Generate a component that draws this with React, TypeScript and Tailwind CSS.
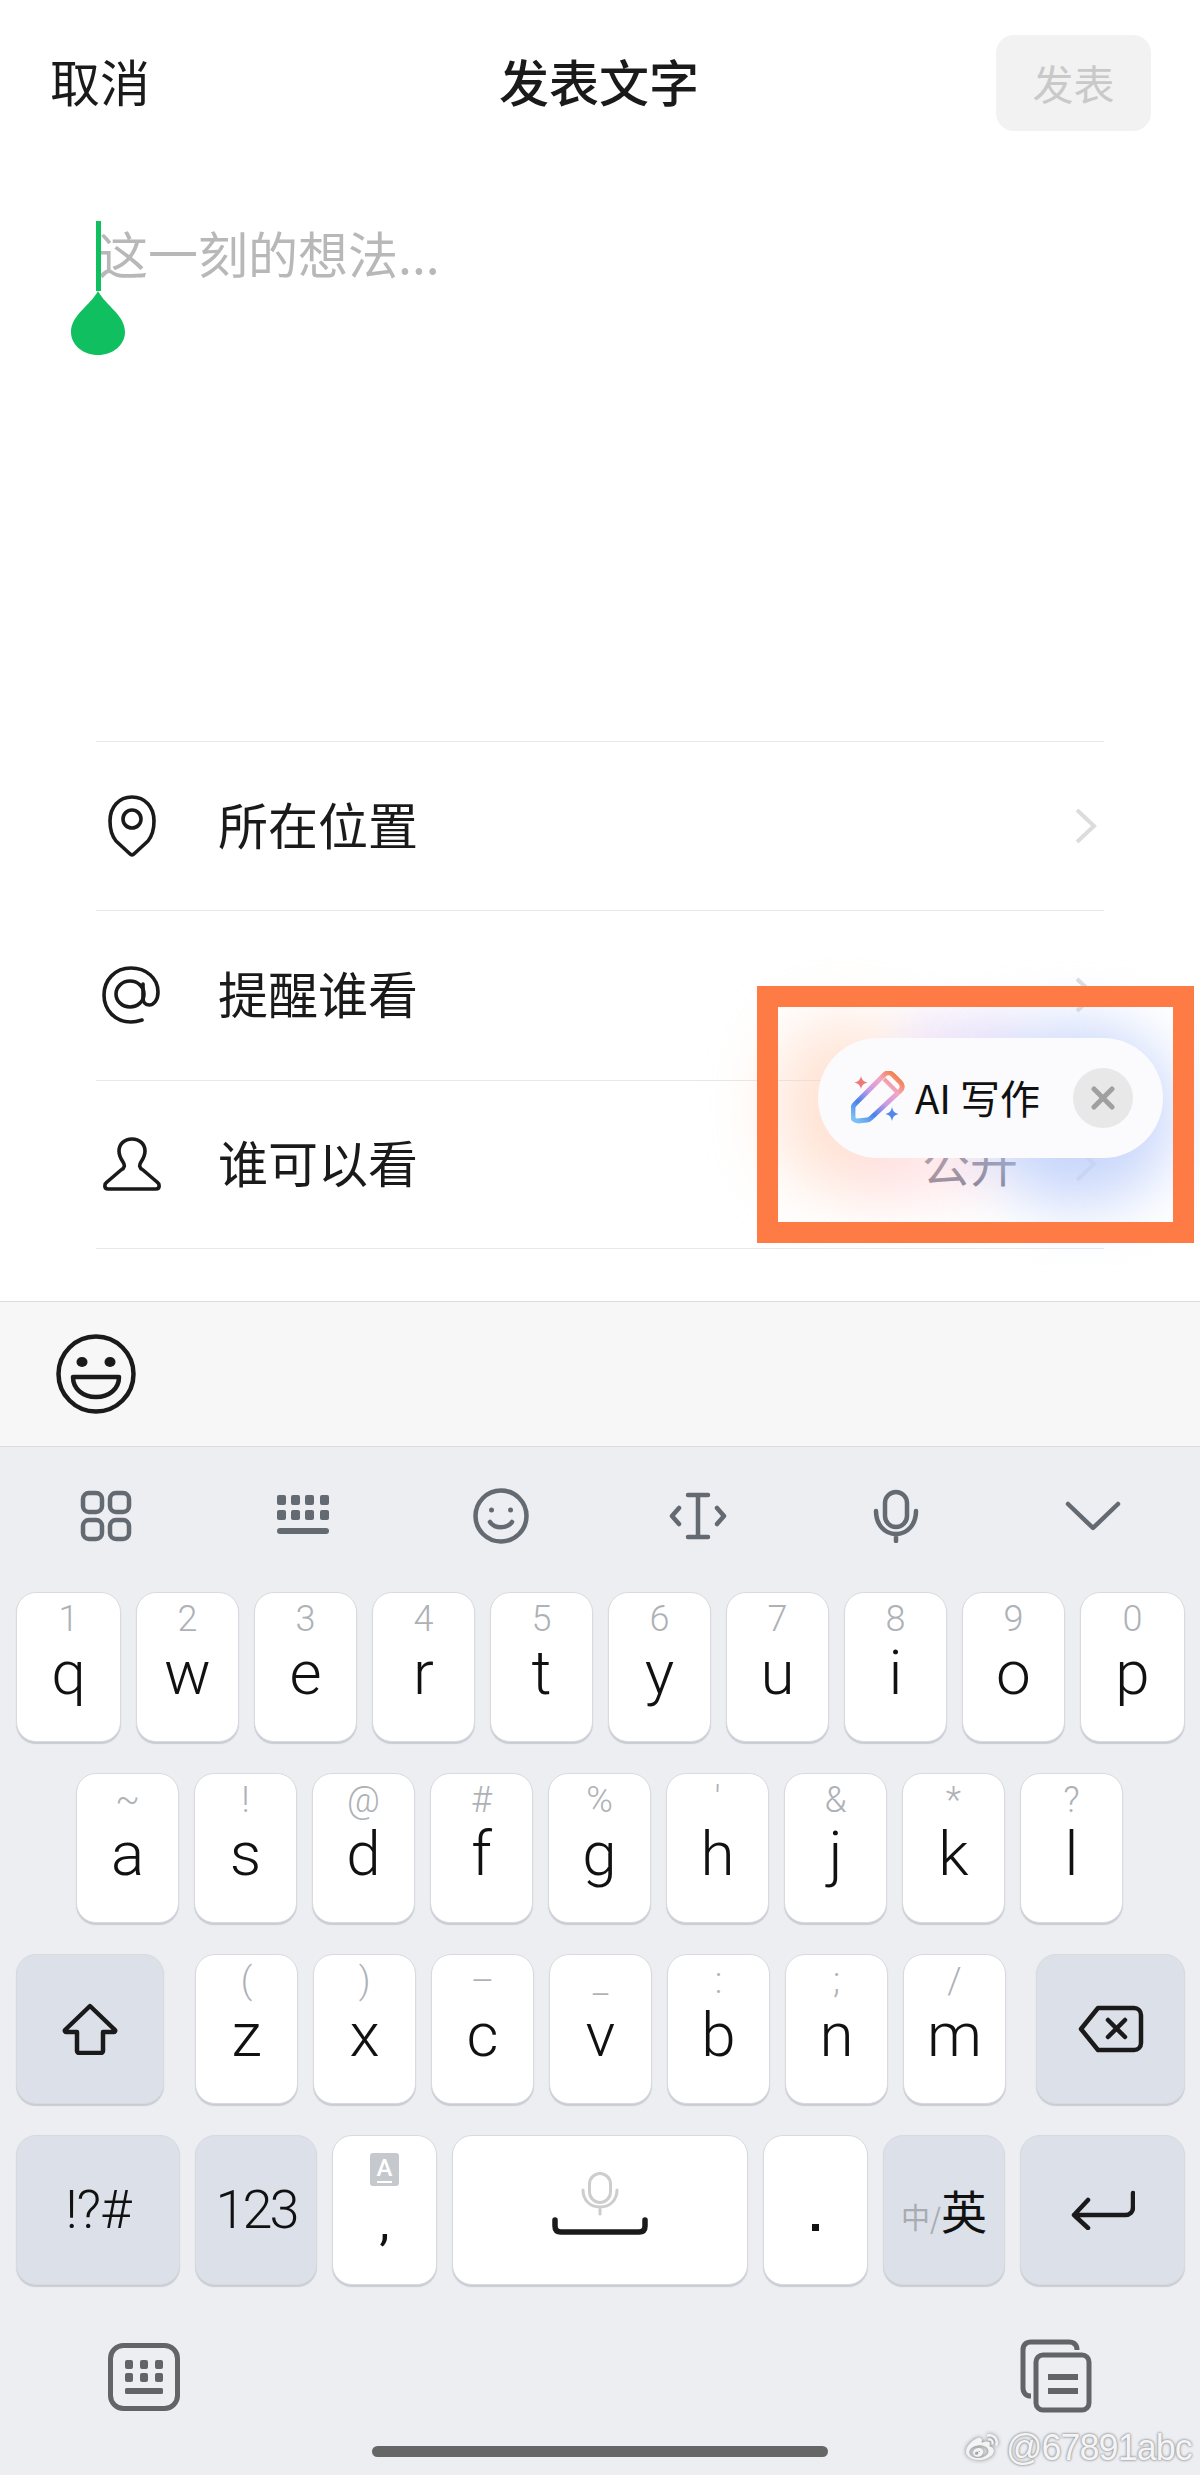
import React from 'react';
import { FaWeibo } from 'react-icons/fa';

const cjk = '[font-family:"Noto_Sans_CJK_SC","Noto_Sans",sans-serif]';

const IconStroke = ({ w, h, vb, sw = 4, color = '#1a1a1a', children }: any) => (
  <svg width={w} height={h} viewBox={vb} fill="none" stroke={color} strokeWidth={sw} strokeLinecap="round" strokeLinejoin="round">
    {children}
  </svg>
);

const Chevron = ({ color = '#dcdcdc' }: { color?: string }) => (
  <svg width="24" height="38" viewBox="0 0 24 38" fill="none" stroke={color} strokeWidth="4">
    <path d="M3 3l17 16L3 35" />
  </svg>
);

const PinIcon = () => (
  <IconStroke w={48} h={62} vb="0 0 48 62" sw={3.6}>
    <path d="M24 60c-1 0-2-1-3-2L8 46C4 41 2 34 2 26 2 12 11 2 24 2s22 10 22 24c0 8-2 15-6 20L27 58c-1 1-2 2-3 2z" />
    <circle cx="24" cy="24" r="9" />
  </IconStroke>
);

const AtIcon = () => (
  <div className="mr-[2px]">
    <IconStroke w={58} h={58} vb="0 0 58 58" sw={3.6}>
      <path d="M40 54c-3 1-7 2-11 2C13 56 2 44 2 29S13 2 29 2c15 0 27 10 27 24 0 8-4 13-9 13-4 0-6-3-6-7V18" />
      <ellipse cx="28" cy="28" rx="14" ry="13" />
    </IconStroke>
  </div>
);

const UserIcon = () => (
  <IconStroke w={58} h={54} vb="0 0 58 54" sw={3.6}>
    <path d="M29 2c-7.500 0-13 5-13 12 0 5 2 8 4 11 2 3 2 6-2 8L4 45c-3 2-3 7 1 7h48c4 0 4-5 1-7L40 33c-4-2-4-5-2-8 2-3 4-6 4-11 0-7-5.500-12-13-12z" />
  </IconStroke>
);

const Row = ({ icon, label, value, last }: { icon: React.ReactNode; label: string; value?: string; last?: boolean }) => (
  <div className={`flex h-[169.33px] items-center border-t border-[#e8e8e8] ${last ? 'border-b' : ''}`}>
    <div className="flex w-[72px] justify-center">{icon}</div>
    <span className={`mb-[6px] ml-[50px] text-[50px] leading-none text-[#1a1a1a] ${cjk}`}>{label}</span>
    <div className="ml-auto flex items-center gap-[56px] pr-[6px]">
      {value && <span className={`mb-[6px] text-[48px] leading-none text-[#5f6375] ${cjk}`}>{value}</span>}
      <Chevron />
    </div>
  </div>
);

const keyBase =
  'flex h-[150px] shrink-0 rounded-[20px] border border-[#d8dade] shadow-[0_2px_1px_#c9ccd3]';

const LetterKey = ({ hint, letter, w = 103, className = '' }: { hint: string; letter: string; w?: number; className?: string }) => (
  <div className={`${keyBase} flex-col items-center bg-white ${className}`} style={{ width: w }}>
    <span className="mt-[6px] h-[40px] text-[36px] leading-[40px] font-light text-[#aeb1b6] [font-family:Roboto,sans-serif]">{hint}</span>
    <span className="mt-[-2px] text-[62px] leading-[72px] font-[350] text-[#111] [font-family:Roboto,sans-serif]">{letter}</span>
  </div>
);

const FuncKey = ({ w, children, className = '' }: { w: number; children: React.ReactNode; className?: string }) => (
  <div className={`${keyBase} items-center justify-center bg-[#dce0e9] ${className}`} style={{ width: w }}>
    {children}
  </div>
);

const row1 = [['1', 'q'], ['2', 'w'], ['3', 'e'], ['4', 'r'], ['5', 't'], ['6', 'y'], ['7', 'u'], ['8', 'i'], ['9', 'o'], ['0', 'p']];
const row2 = [['~', 'a'], ['!', 's'], ['@', 'd'], ['#', 'f'], ['%', 'g'], ["'", 'h'], ['&', 'j'], ['*', 'k'], ['?', 'l']];
const row3 = [['(', 'z'], [')', 'x'], ['–', 'c'], ['_', 'v'], [':', 'b'], [';', 'n'], ['/', 'm']];

const toolColor = '#646a72';

const PencilSpark = () => (
  <svg width="54" height="54" viewBox="0 0 54 54" fill="none">
    <defs>
      <linearGradient id="pen" x1="46" y1="2" x2="6" y2="50" gradientUnits="userSpaceOnUse">
        <stop offset="0" stopColor="#f57a35" />
        <stop offset="0.25" stopColor="#f2a6c4" />
        <stop offset="0.5" stopColor="#c89ae6" />
        <stop offset="0.75" stopColor="#4a82ea" />
        <stop offset="1" stopColor="#7cc0f5" />
      </linearGradient>
    </defs>
    <path d="M4 33L33 4c3-3 6-3 9 0l7 7c3 3 3 6 0 9L20 47c-1 1-2 2-4 2L7 50c-3 0-5-2-5-4v-9c0-1 1-3 2-4z" stroke="url(#pen)" strokeWidth="4.8" strokeLinejoin="round" />
    <path d="M33 8l13 13" stroke="url(#pen)" strokeWidth="4" />
    <path d="M10 5c1 4 2.500 5.500 6.500 6.500-4 1-5.500 2.500-6.500 6.500-1-4-2.500-5.500-6.500-6.500 4-1 5.500-2.500 6.500-6.500z" fill="#ec7a78" />
    <path d="M41 36c1 4.500 2.500 6 6.500 7-4 1-5.500 2.500-6.500 7-1-4.500-2.500-6-6.500-7 4-1 5.500-2.500 6.500-7z" fill="#5487ec" />
  </svg>
);

export default function App() {
  return (
    <div className="relative flex h-[2475px] w-[1200px] flex-col overflow-hidden bg-white">
      {/* header */}
      <div className="flex h-[166px] items-start justify-between pr-[49px] pl-[50px] pt-[35px]">
        <span className={`mt-[20px] text-[50px] leading-[50px] text-[#1a1a1a] ${cjk}`}>取消</span>
        <span className={`ml-[52px] mt-[20px] text-[50px] leading-[50px] font-medium text-[#1a1a1a] ${cjk}`}>发表文字</span>
        <div className={`flex h-[96px] w-[155px] items-center justify-center rounded-[18px] bg-[#f2f2f2] text-[41px] text-[#c9c9c9] ${cjk}`}>发表</div>
      </div>

      {/* text field */}
      <div className="relative h-[575px] pl-[98px] pt-[51px]">
        <span className={`text-[50px] leading-[70px] text-[#b8b8b8] ${cjk}`}>这一刻的想法...</span>
        <div className="absolute top-[55px] left-[96px] h-[70px] w-[5px] bg-[#10c060]" />
        <svg className="absolute top-[125px] left-[71px]" width="54" height="64" viewBox="0 0 54 64">
          <path d="M27 0C35 15 54 24 54 41c0 13-12 23-27 23S0 54 0 41C0 24 19 15 27 0z" fill="#10c060" />
        </svg>
      </div>

      {/* options */}
      <div className="ml-[96px] w-[1008px]">
        <Row icon={<PinIcon />} label="所在位置" />
        <Row icon={<AtIcon />} label="提醒谁看" />
        <Row icon={<UserIcon />} label="谁可以看" value="公开" last />
      </div>

      {/* emoji bar */}
      <div className="mt-[52px] flex h-[146px] items-center border-y border-[#dcdcdc] bg-[#f7f7f7] pl-[56px]">
        <svg width="80" height="80" viewBox="0 0 80 80" fill="none" stroke="#1a1a1a" strokeWidth="4.5">
          <circle cx="40" cy="40" r="37.5" />
          <ellipse cx="26" cy="28" rx="5.5" ry="5" fill="#1a1a1a" stroke="none" />
          <ellipse cx="54" cy="28" rx="5.5" ry="5" fill="#1a1a1a" stroke="none" />
          <path d="M17 43h46c0 12-10 20-23 20S17 55 17 43z" strokeLinejoin="round" />
        </svg>
      </div>

      {/* keyboard */}
      <div className="flex flex-1 flex-col bg-[#eceef2]">
        <div className="flex h-[145px] items-center pb-[6px] pl-[7px]">
          <div className="flex w-[197.5px] justify-center">
            <IconStroke w={52} h={52} vb="0 0 52 52" sw={4.5} color={toolColor}>
              <rect x="3" y="3" width="19" height="19" rx="6" />
              <rect x="30" y="3" width="19" height="19" rx="6" />
              <rect x="3" y="30" width="19" height="19" rx="6" />
              <rect x="30" y="30" width="19" height="19" rx="6" />
            </IconStroke>
          </div>
          <div className="flex w-[197.5px] justify-center">
            <svg width="52" height="42" viewBox="0 0 52 42" fill={toolColor}>
              <rect x="0" y="0" width="9" height="10" rx="2" />
              <rect x="14" y="0" width="9" height="10" rx="2" />
              <rect x="28" y="0" width="9" height="10" rx="2" />
              <rect x="43" y="0" width="9" height="10" rx="2" />
              <rect x="0" y="15" width="9" height="10" rx="2" />
              <rect x="14" y="15" width="9" height="10" rx="2" />
              <rect x="28" y="15" width="9" height="10" rx="2" />
              <rect x="43" y="15" width="9" height="10" rx="2" />
              <rect x="0" y="33" width="52" height="6" rx="3" />
            </svg>
          </div>
          <div className="flex w-[197.5px] justify-center">
            <IconStroke w={56} h={56} vb="0 0 56 56" sw={4.5} color={toolColor}>
              <circle cx="28" cy="28" r="25.5" />
              <circle cx="18.5" cy="22" r="2.5" fill={toolColor} stroke="none" />
              <circle cx="37.5" cy="22" r="2.5" fill={toolColor} stroke="none" />
              <path d="M17 34c5 7 17 7 22 0" />
            </IconStroke>
          </div>
          <div className="flex w-[197.5px] justify-center">
            <IconStroke w={58} h={48} vb="0 0 58 48" sw={4.5} color={toolColor}>
              <path d="M19 3h20M19 45h20M29 3v42" />
              <path d="M10 16l-7 8 7 8M48 16l7 8-7 8" />
            </IconStroke>
          </div>
          <div className="flex w-[197.5px] justify-center">
            <IconStroke w={46} h={54} vb="0 0 46 54" sw={4.5} color={toolColor}>
              <rect x="12" y="3" width="22" height="35" rx="11" />
              <path d="M3 22c0 14 9 23 20 23s20-9 20-23M23 45v7" />
            </IconStroke>
          </div>
          <div className="flex w-[197.5px] justify-center">
            <IconStroke w={56} h={30} vb="0 0 56 30" sw={4.5} color={toolColor}>
              <path d="M3 3l25 24L53 3" />
            </IconStroke>
          </div>
        </div>

        <div className="flex flex-col gap-[31px] pl-[16px]">
          <div className="flex gap-[15px]">
            {row1.map(([hint, letter], i) => (
              <LetterKey key={letter} hint={hint} letter={letter} w={i === 0 || i === 9 ? 105 : 103} />
            ))}
          </div>
          <div className="flex gap-[15px] pl-[60px]">
            {row2.map(([hint, letter]) => (
              <LetterKey key={letter} hint={hint} letter={letter} />
            ))}
          </div>
          <div className="flex gap-[15px]">
            <FuncKey w={148} className="mr-[16px]">
              <IconStroke w={56} h={52} vb="0 0 56 52" sw={4.5}>
                <path d="M28 3L3 27c-.5.5 0 2 1 2h11v19c0 1 1 2 2 2h22c1 0 2-1 2-2V29h11c1 0 1.500-1.500 1-2L28 3z" />
              </IconStroke>
            </FuncKey>
            {row3.map(([hint, letter]) => (
              <LetterKey key={letter} hint={hint} letter={letter} />
            ))}
            <FuncKey w={149} className="ml-[15px]">
              <IconStroke w={66} h={48} vb="0 0 66 48" sw={4.5}>
                <path d="M20 3h36c4 0 7 3 7 7v28c0 4-3 7-7 7H20L3 24 20 3z" />
                <path d="M30 15l17 17M47 15L30 32" />
              </IconStroke>
            </FuncKey>
          </div>
          <div className="flex gap-[15px]">
            <FuncKey w={164}>
              <span className="text-[54px] font-[350] tracking-[-1px] text-[#111] [font-family:Roboto,sans-serif]">!?#</span>
            </FuncKey>
            <FuncKey w={122}>
              <span className="text-[54px] font-[350] tracking-[-3px] text-[#111] [font-family:Roboto,sans-serif]">123</span>
            </FuncKey>
            <div className={`${keyBase} w-[105px] flex-col items-center bg-white`}>
              <div className="mt-[17px] flex h-[33px] w-[29px] items-center justify-center rounded-[3px] bg-[#c5c9cd] text-[24px] leading-none font-medium text-white [font-family:Roboto,sans-serif]">
                <span className="border-b-2 border-white leading-[26px]">A</span>
              </div>
              <span className="mt-[6px] text-[50px] leading-[60px] text-[#111] [font-family:Roboto,sans-serif]">,</span>
            </div>
            <div className={`${keyBase} w-[296px] items-center justify-center bg-white`}>
              <svg className="mb-[11px]" width="96" height="64" viewBox="0 0 96 64" fill="none" strokeLinecap="round" strokeLinejoin="round">
                <g stroke="#cdcdcd" strokeWidth="3">
                  <rect x="37.500" y="1.500" width="21" height="29" rx="10.500" />
                  <path d="M31 18c0 10 7 17 17 17s17-7 17-17M48 35v7" />
                </g>
                <path d="M3 48v6c0 4 2 6 6 6h78c4 0 6-2 6-6v-6" stroke="#1a1a1a" strokeWidth="5.500" />
              </svg>
            </div>
            <div className={`${keyBase} w-[105px] items-center justify-center bg-white`}>
              <div className="mt-[36px] h-[7px] w-[7px] bg-[#111]" />
            </div>
            <FuncKey w={122}>
              <span className={`flex items-baseline text-[#a8abb0] ${cjk}`}>
                <span className="text-[29px]">中</span>
                <span className="text-[28px]">/</span>
                <span className="text-[46px] text-[#111]">英</span>
              </span>
            </FuncKey>
            <FuncKey w={165}>
              <IconStroke w={64} h={40} vb="0 0 64 40" sw={4.5}>
                <path d="M62 3v14c0 5-3 8-8 8H3M17 10L3 25l14 13" />
              </IconStroke>
            </FuncKey>
          </div>
        </div>

        <div className="flex justify-between pt-[54px] pr-[108px] pl-[108px]">
          <svg className="mt-[4px]" width="72" height="68" viewBox="0 0 72 68" fill="none">
            <rect x="2.500" y="2.500" width="67" height="63" rx="13" stroke="#636467" strokeWidth="5" />
            <g fill="#636467">
              <rect x="17" y="17" width="8" height="9" rx="2" />
              <rect x="32" y="17" width="8" height="9" rx="2" />
              <rect x="47" y="17" width="8" height="9" rx="2" />
              <rect x="17" y="30" width="8" height="9" rx="2" />
              <rect x="32" y="30" width="8" height="9" rx="2" />
              <rect x="47" y="30" width="8" height="9" rx="2" />
              <rect x="17" y="45" width="38" height="6" rx="1.500" />
            </g>
          </svg>
          <svg width="72" height="74" viewBox="0 0 72 74" fill="none" stroke="#636467" strokeWidth="5" strokeLinejoin="round">
            <path d="M57 11c0-5-3-8-8-8H11c-5 0-8 3-8 8v38c0 5 3 8 8 8" />
            <rect x="16" y="16" width="53" height="55" rx="7" />
            <path d="M28 38h30M28 52h30" strokeWidth="6" />
          </svg>
        </div>

        <div className="mt-auto mb-[18px] ml-[372px] h-[11px] w-[456px] rounded-full bg-[#666]" />
      </div>

      {/* watermark */}
      <div className="absolute top-[2428px] left-[963px] flex items-center gap-[5px] text-[36px] leading-[40px] tracking-[-1px] text-[#f4f4f6] [font-family:'Liberation_Sans',sans-serif] [text-shadow:0_0_3px_#8a8a8a,0_0_2px_#9a9a9a]">
        <FaWeibo className="h-[32px] w-[38px] [filter:drop-shadow(0_0_2px_#777)]" />
        <span>@67891abc</span>
      </div>

      {/* AI popup */}
      <div className="absolute top-[1000px] left-[770px] h-[228px] w-[410px]">
        <div className="absolute top-[20px] left-[5px] h-[170px] w-[140px] rounded-full bg-[#ffd0b8]/60 blur-[32px]" />
        <div className="absolute top-[120px] left-[80px] h-[80px] w-[150px] rounded-full bg-[#ffd6dc]/50 blur-[25px]" />
        <div className="absolute top-[15px] left-[130px] h-[60px] w-[130px] rounded-full bg-[#e2d4f6]/60 blur-[22px]" />
        <div className="absolute top-[25px] left-[210px] h-[180px] w-[195px] rounded-full bg-[#c2d1fb]/90 blur-[30px]" />
      </div>
      <div className="absolute top-[986px] left-[757px] h-[257px] w-[437px] border-[21px] border-[#ff7b45]" />
      <div className="absolute top-[1038px] left-[818px] flex h-[120px] w-[345px] items-center rounded-full bg-[#fbfbfd] pl-[33px]">
        <PencilSpark />
        <span className={`mb-[2px] ml-[10px] text-[40px] leading-none text-[#111] ${cjk}`}>AI 写作</span>
        <div className="mr-[30px] ml-auto flex h-[60px] w-[60px] items-center justify-center rounded-full bg-[#e8e8e8]">
          <svg width="24" height="24" viewBox="0 0 24 24" stroke="#a0a0a0" strokeWidth="5" strokeLinecap="round">
            <path d="M3 3l18 18M21 3L3 21" />
          </svg>
        </div>
      </div>
    </div>
  );
}
